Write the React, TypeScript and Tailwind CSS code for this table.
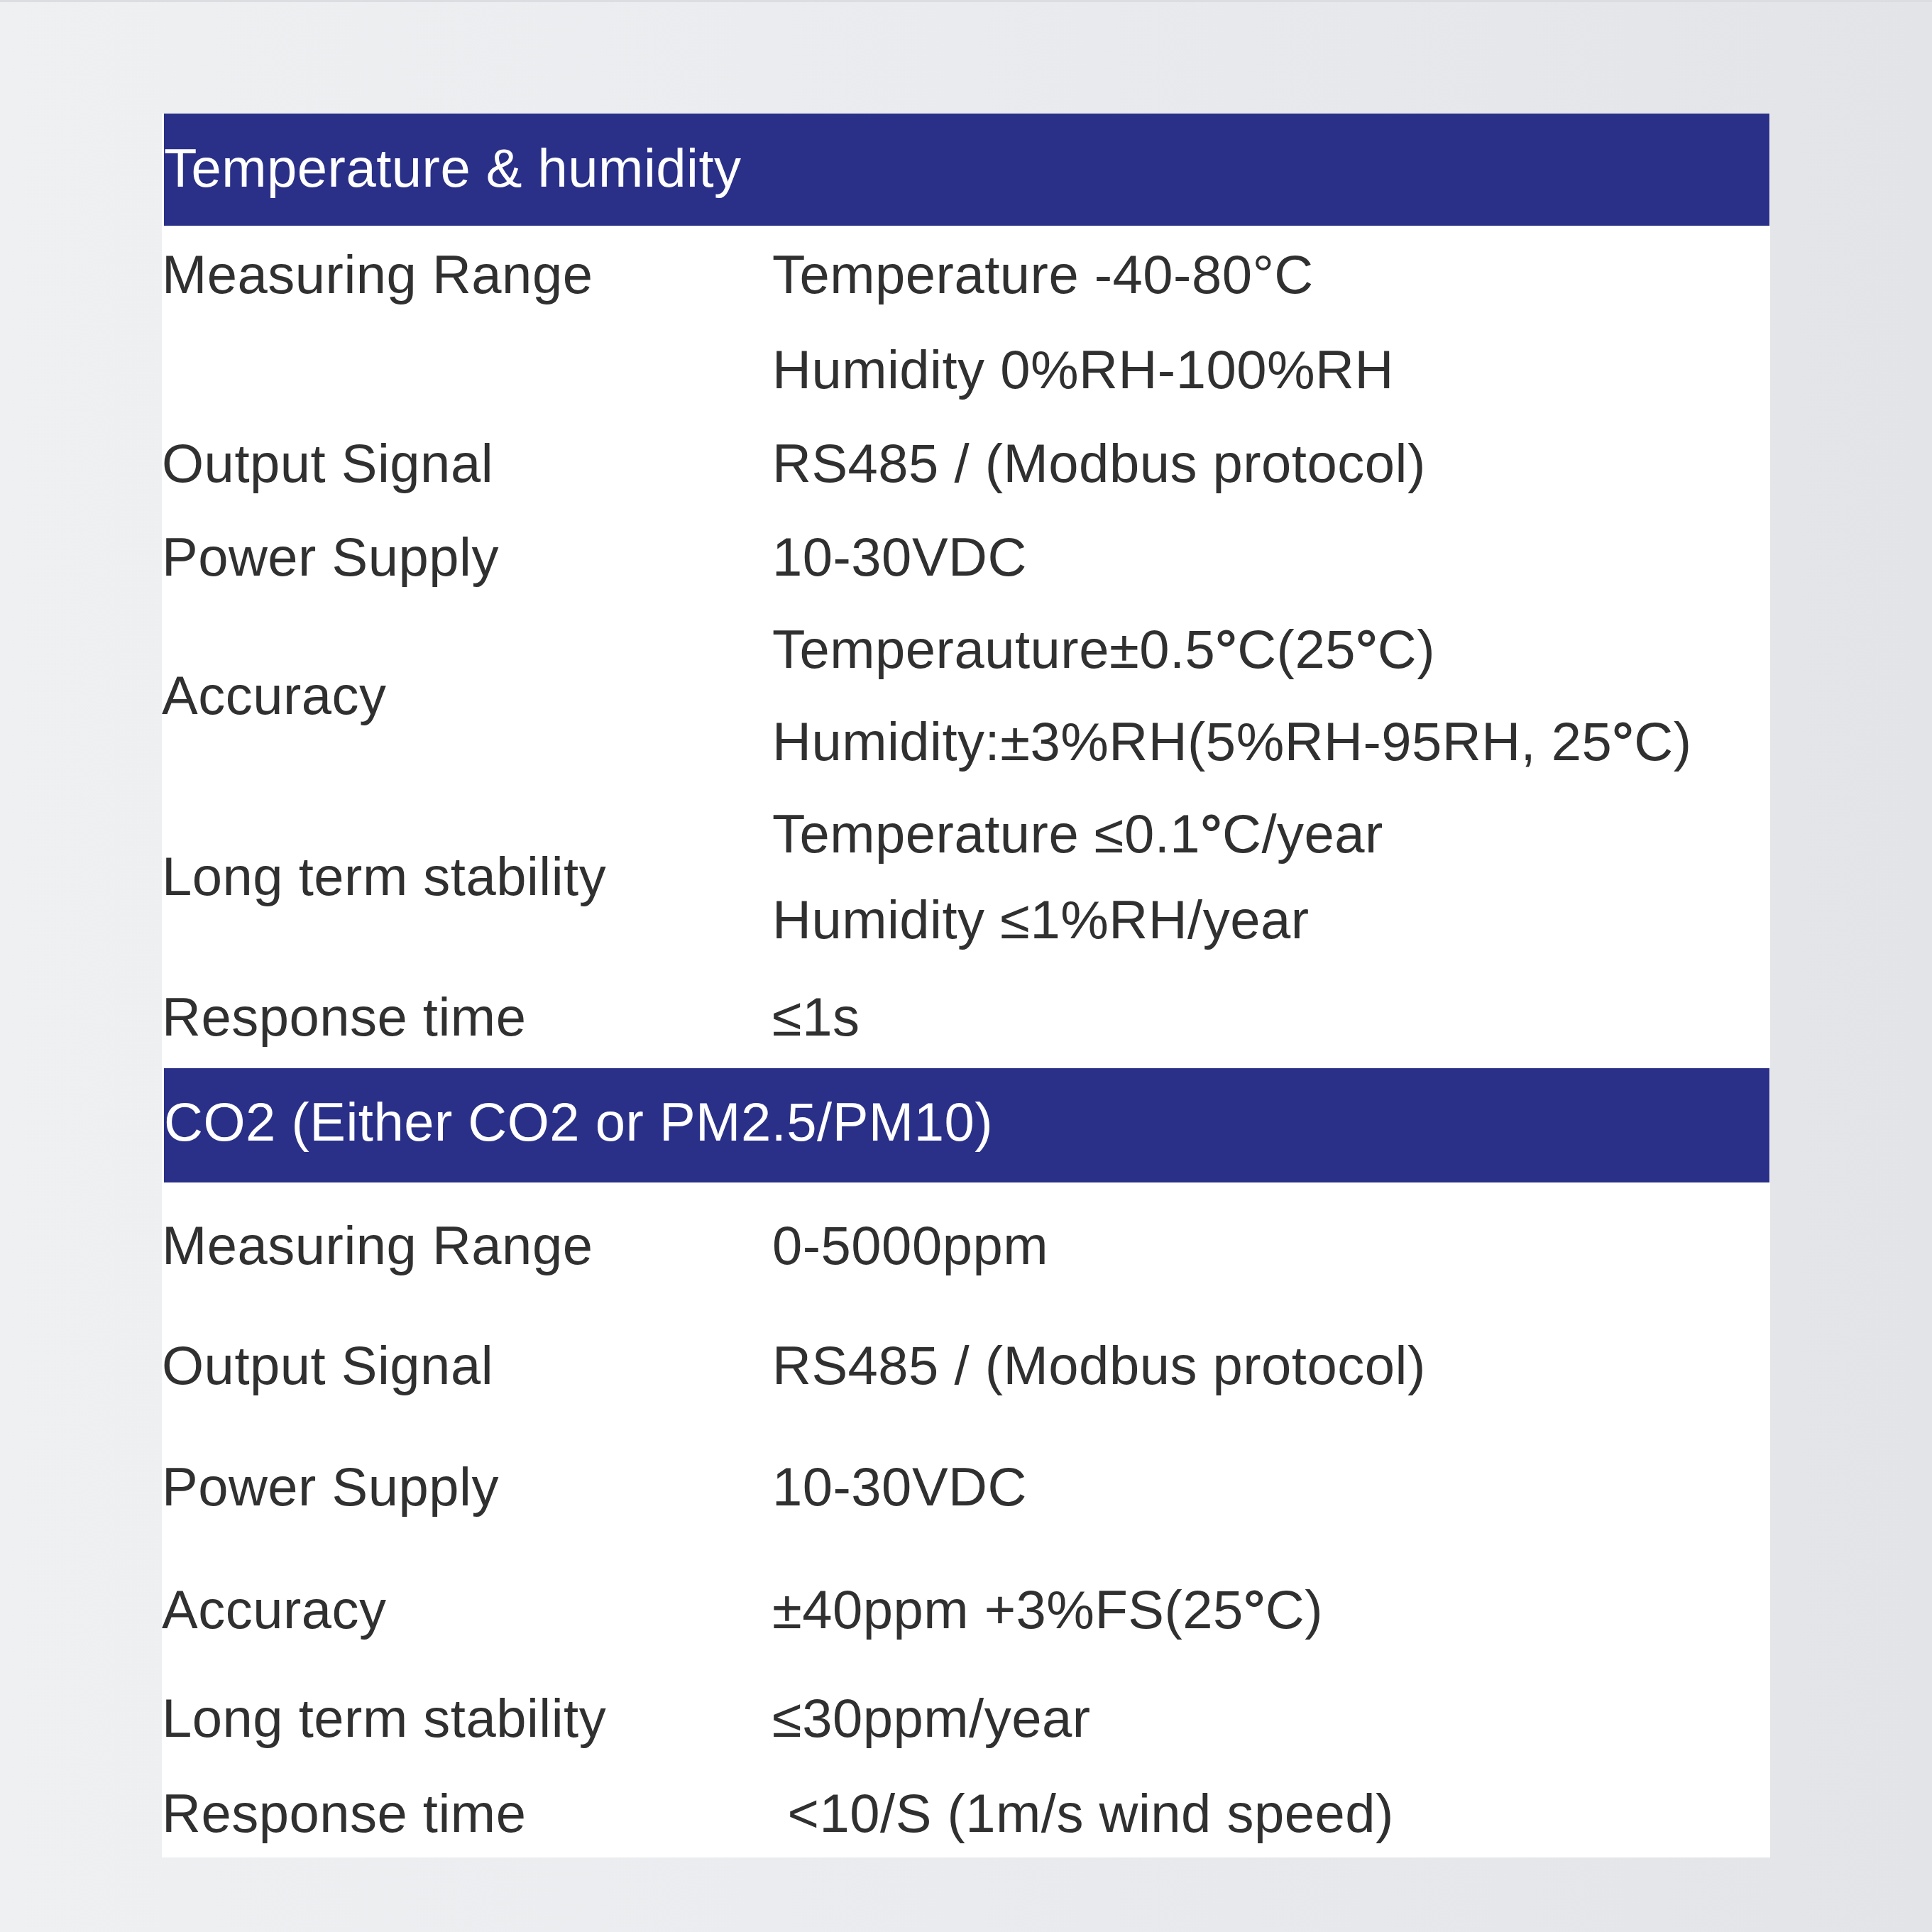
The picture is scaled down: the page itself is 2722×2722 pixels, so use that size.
import type { ReactNode } from 'react'

type SpecRow = {
  label: string
  values: ReactNode[]
  height: string
  lineHeight?: string
}

function Deg() {
  return <span className="font-bold">°</span>
}

const tempHumidity: SpecRow[] = [
  { label: 'Measuring Range', values: ['Temperature -40-80°C'], height: 'h-[138px]' },
  { label: '', values: ['Humidity 0%RH-100%RH'], height: 'h-[130px]' },
  { label: 'Output Signal', values: ['RS485 / (Modbus protocol)'], height: 'h-[134px]' },
  { label: 'Power Supply', values: ['10-30VDC'], height: 'h-[130px]' },
  {
    label: 'Accuracy',
    values: [
      <>
        Temperauture±0.5<Deg />C(25<Deg />C)
      </>,
      <>
        Humidity:±3%RH(5%RH-95RH, 25<Deg />C)
      </>,
    ],
    height: 'h-[260px]',
    lineHeight: 'leading-[130px]',
  },
  {
    label: 'Long term stability',
    values: [
      <>
        Temperature ≤0.1<Deg />C/year
      </>,
      'Humidity ≤1%RH/year',
    ],
    height: 'h-[250px]',
    lineHeight: 'leading-[121px]',
  },
  { label: 'Response time', values: ['≤1s'], height: 'h-[145px]' },
]

const co2: SpecRow[] = [
  { label: 'Measuring Range', values: ['0-5000ppm'], height: 'h-[178px]' },
  { label: 'Output Signal', values: ['RS485 / (Modbus protocol)'], height: 'h-[160px]' },
  { label: 'Power Supply', values: ['10-30VDC'], height: 'h-[182px]' },
  {
    label: 'Accuracy',
    values: [
      <>
        ±40ppm +3%FS(25<Deg />C)
      </>,
    ],
    height: 'h-[164px]',
  },
  { label: 'Long term stability', values: ['≤30ppm/year'], height: 'h-[142px]' },
  { label: 'Response time', values: ['\u00a0<10/S (1m/s wind speed)'], height: 'h-[125px]' },
]

function SectionHeader({ title, className }: { title: string; className: string }) {
  return (
    <div className={`ml-[3px] mr-[1px] flex items-center bg-[#2a3088] text-white leading-none ${className}`}>
      {title}
    </div>
  )
}

function Row({ row }: { row: SpecRow }) {
  return (
    <div className={`flex items-center ${row.height}`}>
      <div className="w-[860px] shrink-0 leading-none">{row.label}</div>
      <div className="flex flex-col">
        {row.values.map((value, i) => (
          <div key={i} className={`whitespace-pre ${row.lineHeight ?? 'leading-none'}`}>
            {value}
          </div>
        ))}
      </div>
    </div>
  )
}

export default function App() {
  return (
    <div className="h-[2722px] w-[2722px] overflow-hidden border-t-[3px] border-[#dcdde0] bg-gradient-to-r from-[#eef0f2] via-[#eaebee] to-[#e3e4e7] font-['Liberation_Sans',Arial,sans-serif] text-[76px] tracking-[0.5px] text-[#303030]">
      <div className="ml-[228px] mt-[157px] w-[2266px] bg-white">
        <SectionHeader title="Temperature & humidity" className="h-[158px] pb-[5px]" />
        {tempHumidity.map((row, i) => (
          <Row key={i} row={row} />
        ))}
        <SectionHeader title="CO2 (Either CO2 or PM2.5/PM10)" className="h-[161px] pb-[10px]" />
        {co2.map((row, i) => (
          <Row key={i} row={row} />
        ))}
      </div>
    </div>
  )
}
